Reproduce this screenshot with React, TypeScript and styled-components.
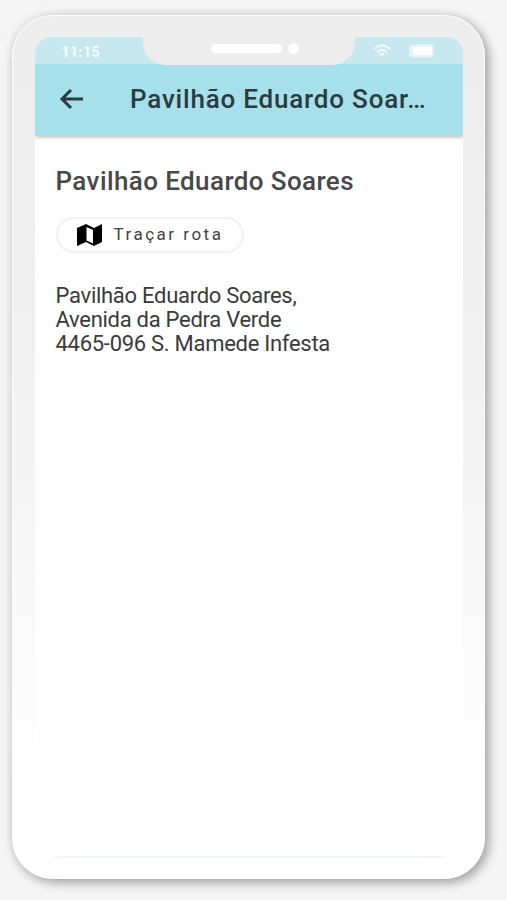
import React from "react";
import styled, { createGlobalStyle } from "styled-components";

const GlobalStyle = createGlobalStyle`
  * { box-sizing: border-box; }
  body { margin: 0; background: #f5f5f5; font-family: Roboto, "Liberation Sans", sans-serif; }
`;

const Page = styled.div`
  width: 507px;
  height: 900px;
  padding: 15px 22px 21px 12px;
  background: #f5f5f5;
  overflow: hidden;
`;

const Phone = styled.div`
  width: 473px;
  height: 864px;
  padding: 20.5px 22px 21px 21.5px;
  border: 1px solid #fdfdfd;
  border-radius: 41px;
  background: linear-gradient(180deg, #ededed 0%, #f1f1f1 40%, #ffffff 90%);
  box-shadow: 4px 4px 11px rgba(0, 0, 0, 0.3), 0 0 12px rgba(0, 0, 0, 0.1);
`;

const Screen = styled.main`
  display: flex;
  flex-direction: column;
  width: 428px;
  height: 821px;
  border-radius: 16px 16px 18px 18px;
  background: #fff;
  overflow: hidden;
`;

const StatusBar = styled.div`
  display: flex;
  flex: none;
  justify-content: space-between;
  height: 27px;
  background: #c7e8ee;
  position: relative;
  z-index: 1;
`;

const Clock = styled.time`
  width: 108px;
  padding: 7px 0 0 27px;
  color: #f4fcfe;
  font: 700 14px/16px Roboto, sans-serif;
  letter-spacing: 0.5px;
`;

const Notch = styled.div`
  display: flex;
  align-items: center;
  justify-content: center;
  gap: 6px;
  width: 212px;
  height: 28px;
  padding: 0 0 5px 12px;
  border-radius: 0 0 23px 23px;
  background: #ededed;
`;

const Speaker = styled.span`
  width: 71px;
  height: 9px;
  border-radius: 5px;
  background: #fff;
`;

const Camera = styled.span`
  width: 11px;
  height: 11px;
  border-radius: 50%;
  background: #fff;
`;

const Indicators = styled.div`
  display: flex;
  align-items: center;
  gap: 18px;
  width: 108px;
  padding: 2px 0 0 18px;
`;

const Header = styled.header`
  display: flex;
  flex: none;
  align-items: center;
  height: 72.5px;
  padding: 0 0 1px 23px;
  background: #a6e0eb;
  box-shadow: 0 1px 4px rgba(0, 0, 0, 0.3);
`;

const BackButton = styled.button`
  display: flex;
  width: 72.5px;
  padding: 0;
  border: 0;
  background: none;
  color: #2b3b40;
`;

const Title = styled.h1`
  margin: 0;
  color: #2b3b40;
  font-size: 26px;
  font-weight: 500;
  line-height: 30px;
  letter-spacing: 0.8px;
  white-space: nowrap;
`;

const Content = styled.section`
  padding: 30px 21px;
`;

const Heading = styled.h2`
  margin: 0 0 21px;
  color: #484848;
  font-size: 26px;
  font-weight: 500;
  line-height: 30px;
  letter-spacing: 0.4px;
  white-space: nowrap;
`;

const RouteButton = styled.button`
  display: flex;
  align-items: center;
  gap: 12px;
  width: 188px;
  height: 36px;
  padding: 0 0 0 19px;
  border: 2px solid #f2f2f2;
  border-radius: 18px;
  background: #fff;
  color: #000;
`;

const RouteLabel = styled.span`
  margin-top: -2px;
  color: #424242;
  font: 400 17px/20px Roboto, sans-serif;
  letter-spacing: 2.5px;
  white-space: nowrap;
`;

const Address = styled.address`
  margin-top: 31px;
  color: #3a3a3a;
  font-size: 22px;
  font-style: normal;
  line-height: 24px;
  letter-spacing: -0.28px;
  white-space: nowrap;
`;

const AddressLine = styled.div``;

const HomeEdge = styled.div`
  flex: none;
  height: 2px;
  margin: auto 14px 0;
  background: linear-gradient(90deg, #fff, #ebf7fd 3%, #ebf7fd 98%, #fff);
`;

export default function App() {
  return (
    <>
      <GlobalStyle />
      <Page>
        <Phone>
          <Screen>
            <StatusBar>
              <Clock>11:15</Clock>
              <Notch>
                <Speaker />
                <Camera />
              </Notch>
              <Indicators>
                <svg width="18" height="14" viewBox="0 0 18 14" fill="none" stroke="#f0fafb" strokeWidth="2">
                  <path d="M1 5Q9-2 17 5M4 8q5-4 10 0" />
                  <path d="M6.5 10q2.5-2 5 0L9 12.5z" fill="#f0fafb" stroke="none" />
                </svg>
                <svg width="25" height="14" viewBox="0 0 25 14">
                  <rect x=".5" y=".5" width="24" height="13" rx="2" fill="#e5f6f8" />
                  <rect x="4" y="3" width="19" height="8" rx="1" fill="#fff" />
                </svg>
              </Indicators>
            </StatusBar>
            <Header>
              <BackButton aria-label="Voltar">
                <svg width="26" height="24" viewBox="0 0 26 24" fill="none" stroke="currentColor" strokeWidth="3">
                  <path d="M25 12H4M13 3L4 12l9 9" />
                </svg>
              </BackButton>
              <Title>Pavilhão Eduardo Soar…</Title>
            </Header>
            <Content>
              <Heading>Pavilhão Eduardo Soares</Heading>
              <RouteButton>
                <svg width="25" height="24" viewBox="0 0 25 24" fill="currentColor">
                  <path fillRule="evenodd" d="M0 5 9 1l8 4 8-4v18l-8 4-8-4-9 4zM9.5 4v13.5l6.5 3V7z" />
                </svg>
                <RouteLabel>Traçar rota</RouteLabel>
              </RouteButton>
              <Address>
                <AddressLine>Pavilhão Eduardo Soares,</AddressLine>
                <AddressLine>Avenida da Pedra Verde</AddressLine>
                <AddressLine>4465-096 S. Mamede Infesta</AddressLine>
              </Address>
            </Content>
            <HomeEdge />
          </Screen>
        </Phone>
      </Page>
    </>
  );
}
